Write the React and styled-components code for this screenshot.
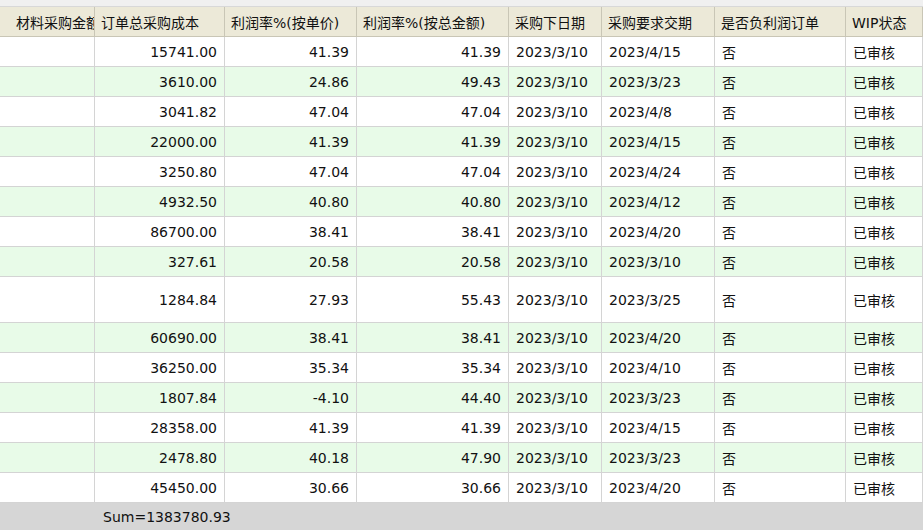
import React from 'react'
import styled, { createGlobalStyle } from 'styled-components'

const Global = createGlobalStyle`
  body { margin: 0; background: #fff; font-family: "DejaVu Sans", "Noto Sans CJK SC", sans-serif; }
`

const Wrap = styled.div`
  width: 923px;
  height: 530px;
  overflow: hidden;
  display: flex;
  flex-direction: column;
  background: #fff;
`

const TopStrip = styled.div`
  height: 7px;
  background: #f0f0f0;
  border-bottom: 1px solid #d8d8d8;
`

const Grid = styled.div`
  display: grid;
  grid-template-columns: 8px 87px 130px 132px 152px 93px 113px 131px 77px;
  flex: 1;
  align-content: start;
`

const Head = styled.div`
  height: 29px;
  background: #ece9d8;
  border-right: 1px solid #c9c6b6;
  border-bottom: 1px solid #c9c6b6;
  font-size: 14px;
  color: #111;
  padding: 0 6px;
  display: flex;
  align-items: center;
  white-space: nowrap;
  overflow: hidden;
`

const Cell = styled.div`
  height: ${p => (p.tall ? 45 : 29)}px;
  background: ${p => (p.alt ? '#e8fbe8' : '#fff')};
  border-right: 1px solid #d4d4d4;
  border-bottom: 1px solid #d4d4d4;
  font-size: 14px;
  color: #111;
  padding: 0 7px;
  display: flex;
  align-items: center;
  justify-content: ${p => (p.right ? 'flex-end' : 'flex-start')};
  white-space: nowrap;
  overflow: hidden;
`

const SumBar = styled.div`
  height: 29px;
  background: #d6d6d6;
  font-size: 14px;
  color: #111;
  display: flex;
  align-items: center;
  padding-left: 103px;
`

const heads = ['', '材料采购金额', '订单总采购成本', '利润率%(按单价)', '利润率%(按总金额)', '采购下日期', '采购要求交期', '是否负利润订单', 'WIP状态']

const rows = [
  ['15741.00', '41.39', '41.39', '2023/4/15'],
  ['3610.00', '24.86', '49.43', '2023/3/23'],
  ['3041.82', '47.04', '47.04', '2023/4/8'],
  ['22000.00', '41.39', '41.39', '2023/4/15'],
  ['3250.80', '47.04', '47.04', '2023/4/24'],
  ['4932.50', '40.80', '40.80', '2023/4/12'],
  ['86700.00', '38.41', '38.41', '2023/4/20'],
  ['327.61', '20.58', '20.58', '2023/3/10'],
  ['1284.84', '27.93', '55.43', '2023/3/25'],
  ['60690.00', '38.41', '38.41', '2023/4/20'],
  ['36250.00', '35.34', '35.34', '2023/4/10'],
  ['1807.84', '-4.10', '44.40', '2023/3/23'],
  ['28358.00', '41.39', '41.39', '2023/4/15'],
  ['2478.80', '40.18', '47.90', '2023/3/23'],
  ['45450.00', '30.66', '30.66', '2023/4/20'],
]

export default function App() {
  return (
    <Wrap>
      <Global />
      <TopStrip />
      <Grid>
        {heads.map((h, i) => (
          <Head key={i} style={i === 1 ? { paddingLeft: 8 } : undefined}>{h}</Head>
        ))}
        {rows.map((r, i) => {
          const alt = i % 2 === 1
          const tall = i === 8
          const p = { alt, tall }
          return (
            <React.Fragment key={i}>
              <Cell {...p} />
              <Cell {...p} />
              <Cell {...p} right>{r[0]}</Cell>
              <Cell {...p} right>{r[1]}</Cell>
              <Cell {...p} right>{r[2]}</Cell>
              <Cell {...p}>2023/3/10</Cell>
              <Cell {...p}>{r[3]}</Cell>
              <Cell {...p}>否</Cell>
              <Cell {...p}>已审核</Cell>
            </React.Fragment>
          )
        })}
      </Grid>
      <SumBar>Sum=1383780.93</SumBar>
    </Wrap>
  )
}
